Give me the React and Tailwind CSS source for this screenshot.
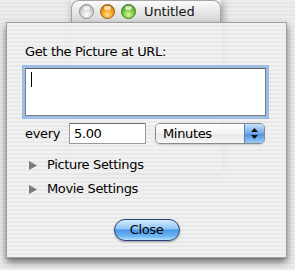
import { useState } from "react";

const stripes =
  "bg-[repeating-linear-gradient(to_bottom,#ededed_0px,#ededed_2px,#e6e6e6_2px,#e6e6e6_4px)]";

function Light({ color }) {
  const styles = {
    grey: "bg-[radial-gradient(circle_at_50%_75%,#ffffff_0%,#d8d8d8_45%,#a9a9a9_100%)] border-[#8c8c8c]",
    orange: "bg-[radial-gradient(circle_at_50%_75%,#ffe08a_0%,#f7a21d_45%,#b9610a_100%)] border-[#9a5a10]",
    green: "bg-[radial-gradient(circle_at_50%_75%,#d6f7a4_0%,#79c83a_45%,#3d8a13_100%)] border-[#3f7a1c]",
  };
  return (
    <span className={`relative block w-[15px] h-[15px] rounded-full border ${styles[color]}`}>
      <span className="absolute left-[3px] top-[1px] w-[7px] h-[4px] rounded-full bg-white/70" />
    </span>
  );
}

function Disclosure({ label }) {
  return (
    <div className="flex items-center h-[16px] pl-[22px]">
      <svg width="8" height="9" viewBox="0 0 8 9" className="mr-[10px]">
        <path d="M0 0 L8 4.5 L0 9 Z" fill="#7a7a7a" />
      </svg>
      <span>{label}</span>
    </div>
  );
}

export default function App() {
  const [every, setEvery] = useState("5.00");

  return (
    <div
      className={`relative w-[295px] h-[270px] overflow-hidden ${stripes} text-[13px] leading-[16px] tracking-[-0.35px] text-black`}
      style={{ fontFamily: '"DejaVu Sans", "Liberation Sans", sans-serif' }}
    >
      {/* window behind the sheet */}
      <div className="absolute left-[71px] top-0 w-[150px] h-[172px] shadow-[2px_2px_8px_rgba(0,0,0,0.35)]">
        <div className="flex items-center h-[22px] pl-[7px] gap-[6px] rounded-t-[8px] border border-b-0 border-[#a5a5a5] bg-[linear-gradient(to_bottom,#fbfbfb,#e4e4e4_60%,#d9d9d9)]">
          <Light color="grey" />
          <Light color="orange" />
          <Light color="green" />
          <span className="ml-[2px] text-[#111] tracking-[-0.1px]">Untitled</span>
        </div>
        <div className="h-[150px] bg-[#f5f5f5]" />
      </div>

      {/* sheet */}
      <div className="absolute left-[6px] top-[22px] w-[281px] flex flex-col border border-[#9e9e9e] bg-[repeating-linear-gradient(to_bottom,rgba(242,242,242,0.9)_0px,rgba(242,242,242,0.9)_2px,rgba(233,233,233,0.9)_2px,rgba(233,233,233,0.9)_4px)] shadow-[0_4px_7px_rgba(0,0,0,0.55)] pt-[21px] pb-[16px]">
        <div className="pl-[18px]">Get the Picture at URL:</div>

        <div className="ml-[18px] mt-[8px] w-[241px] h-[48px] bg-white border border-[#7d7d7d] border-t-[#5f5f5f] shadow-[0_0_0_3px_#9bbde6] relative">
          <span className="absolute left-[5px] top-[3px] w-px h-[15px] bg-black" />
        </div>

        <div className="flex items-center mt-[7px] pl-[18px] h-[21px]">
          <span className="w-[44px]">every</span>
          <input
            value={every}
            onChange={(e) => setEvery(e.target.value)}
            className="w-[77px] h-[21px] px-[4px] bg-white border border-[#9a9a9a] border-t-[#6e6e6e] outline-none text-[13px] tracking-[-0.35px]"
            style={{ fontFamily: "inherit" }}
          />
          <div className="ml-[9px] flex w-[110px] h-[21px] rounded-[5px] border border-[#8a8a8a] overflow-hidden shadow-[0_1px_1px_rgba(0,0,0,0.15)]">
            <div className="flex-1 flex items-center pl-[7px] bg-[linear-gradient(to_bottom,#ffffff,#f3f3f3_50%,#e6e6e6_51%,#f7f7f7)]">
              Minutes
            </div>
            <div className="w-[20px] flex items-center justify-center border-l border-[#5a7fb5] bg-[linear-gradient(to_bottom,#c8e1fb,#6fa8ea_50%,#4b8fe0_51%,#9ccaf5)]">
              <svg width="7" height="11" viewBox="0 0 7 11">
                <path d="M3.5 0 L7 4 L0 4 Z M0 7 L7 7 L3.5 11 Z" fill="#111" />
              </svg>
            </div>
          </div>
        </div>

        <div className="mt-[13px]">
          <Disclosure label="Picture Settings" />
        </div>
        <div className="mt-[8px]">
          <Disclosure label="Movie Settings" />
        </div>

        <div className="mt-[22px] flex justify-center">
          <button className="w-[66px] h-[22px] rounded-full border border-[#24447a] bg-[linear-gradient(to_bottom,#d4ebfd,#8cc3f3_45%,#4b97e6_50%,#6cb4f2_80%,#b5e0fd)] shadow-[0_1px_2px_rgba(0,0,0,0.35)] text-[13px] leading-[20px]">
            Close
          </button>
        </div>
      </div>
    </div>
  );
}
